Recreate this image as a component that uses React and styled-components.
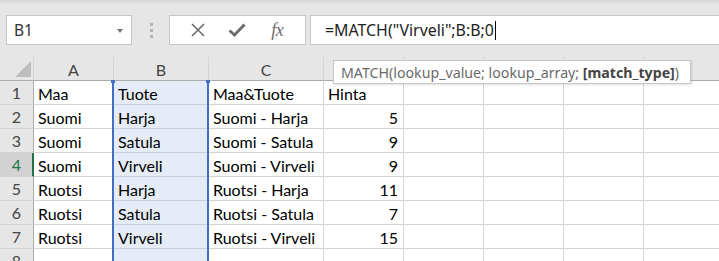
import React from "react";
import styled, { createGlobalStyle } from "styled-components";

const Global = createGlobalStyle`
  html, body { margin: 0; padding: 0; background: #ffffff; overflow: hidden; }
  * { box-sizing: border-box; }
`;

const Page = styled.div`
  width: 719px;
  height: 261px;
  overflow: hidden;
  background: #e6e6e6;
  display: flex;
  flex-direction: column;
`;

const Toolbar = styled.div`
  height: 57px;
  flex: none;
  display: flex;
  align-items: flex-start;
  padding: 15px 0 0 6px;
  background: linear-gradient(#d4d4d4 0px, #dedede 2px, #e6e6e6 5px, #e6e6e6 100%);
`;

const NameBox = styled.div`
  width: 126px;
  height: 30px;
  background: #fff;
  border: 1px solid #c6c6c6;
  display: flex;
  align-items: center;
  justify-content: space-between;
  padding: 0 8px 0 7px;
  font-family: "Noto Sans", "Open Sans", sans-serif;
  font-size: 15.5px;
  color: #333;
`;

const Caret = styled.span`
  width: 0;
  height: 0;
  border-left: 3.5px solid transparent;
  border-right: 3.5px solid transparent;
  border-top: 4px solid #777;
  margin-top: 1px;
`;

const Grip = styled.div`
  width: 3px;
  height: 30px;
  margin: 0 16px 0 18px;
  display: flex;
  flex-direction: column;
  justify-content: center;
  gap: 3px;
`;

const Dot = styled.span`
  width: 3px;
  height: 3px;
  background: #b4b4b4;
`;

const ButtonBox = styled.div`
  width: 137px;
  height: 30px;
  background: #fff;
  border: 1px solid #c6c6c6;
  display: flex;
  align-items: center;
  justify-content: space-around;
  padding: 0 8px;
`;

const IconButton = styled.span`
  width: 24px;
  height: 24px;
  display: flex;
  align-items: center;
  justify-content: center;
  color: #6d6d6d;
`;

const Fx = styled.span`
  font-family: "Liberation Serif", "DejaVu Serif", serif;
  font-style: italic;
  font-size: 18px;
  color: #6d6d6d;
  letter-spacing: -0.5px;
`;

const FormulaBox = styled.div`
  flex: 1;
  height: 30px;
  margin-left: 4px;
  background: #fff;
  border: 1px solid #c6c6c6;
  border-right: none;
  display: flex;
  align-items: center;
  padding-left: 14px;
  font-family: "Noto Sans", "Open Sans", sans-serif;
  font-size: 15.9px;
  color: #222;
`;

const Cursor = styled.span`
  display: inline-block;
  width: 1px;
  height: 19px;
  background: #000;
  margin-left: 1px;
  vertical-align: middle;
`;

const SheetWrap = styled.div`
  position: relative;
  flex: 1;
  overflow: hidden;
`;

const Grid = styled.div`
  display: grid;
  grid-template-columns: 34px 80px 95px 115px 80px 80px 80px 80px 80px;
  grid-auto-rows: 24px;
  background: #fff;
`;

const Corner = styled.div`
  background: #e6e6e6;
  border-right: 1px solid #d4d4d4;
  border-bottom: 1px solid #ababab;
  position: relative;
  &::after {
    content: "";
    position: absolute;
    right: 2px;
    bottom: 3px;
    width: 0;
    height: 0;
    border-left: 16px solid transparent;
    border-bottom: 16px solid #bdbdbd;
  }
`;

const ColHead = styled.div`
  background: #e6e6e6;
  border-right: 1px solid #d4d4d4;
  border-bottom: 1px solid #ababab;
  display: flex;
  align-items: center;
  justify-content: center;
  font-family: "Lato", "Open Sans", sans-serif;
  font-size: 16px;
  color: #444;
  padding-top: 1px;
`;

const RowHead = styled.div`
  background: ${(p) => (p.$active ? "#d2d2d2" : "#e6e6e6")};
  border-right: ${(p) => (p.$active ? "2px solid #217346" : "1px solid #ababab")};
  border-bottom: 1px solid #d4d4d4;
  display: flex;
  align-items: center;
  justify-content: center;
  font-family: "Lato", "Open Sans", sans-serif;
  font-size: 16px;
  color: ${(p) => (p.$active ? "#217346" : "#444")};
  padding-left: ${(p) => (p.$active ? "1px" : "0")};
`;

const Cell = styled.div`
  background: ${(p) => (p.$range ? "#e5ecf7" : "#fff")};
  border-right: 1px solid #d4d4d4;
  border-bottom: 1px solid ${(p) => (p.$range ? "#c7d0e0" : "#d4d4d4")};
  display: flex;
  align-items: center;
  justify-content: ${(p) => (p.$num ? "flex-end" : "flex-start")};
  padding: 1px 5px 0 4px;
  font-family: "Lato", "Open Sans", sans-serif;
  font-size: 16px;
  color: #000;
  white-space: nowrap;
  overflow: visible;
`;

const RangeFrame = styled.div`
  position: absolute;
  left: 112px;
  top: 23px;
  width: 97px;
  bottom: 0;
  border-left: 2px solid #3f6fc6;
  border-right: 2px solid #3f6fc6;
  pointer-events: none;
  &::before,
  &::after {
    content: "";
    position: absolute;
    top: 0;
    width: 4px;
    height: 3px;
    background: #3f6fc6;
  }
  &::before { left: -3px; }
  &::after { right: -3px; }
`;

const Tooltip = styled.div`
  position: absolute;
  left: 333px;
  top: 3px;
  width: 358px;
  height: 24px;
  background: #fff;
  border: 1px solid #c8c8c8;
  box-shadow: 1px 1px 2px rgba(0, 0, 0, 0.12);
  display: flex;
  align-items: center;
  padding-left: 7px;
  font-family: "Noto Sans", "Open Sans", sans-serif;
  font-size: 14.2px;
  color: #6a6a6a;
  white-space: nowrap;
`;

const Bold = styled.b`
  color: #444;
  font-weight: 700;
`;

const cols = ["A", "B", "C", "D", "E", "F", "G", "H"];

const rows = [
  ["Maa", "Tuote", "Maa&Tuote", "Hinta"],
  ["Suomi", "Harja", "Suomi - Harja", 5],
  ["Suomi", "Satula", "Suomi - Satula", 9],
  ["Suomi", "Virveli", "Suomi - Virveli", 9],
  ["Ruotsi", "Harja", "Ruotsi - Harja", 11],
  ["Ruotsi", "Satula", "Ruotsi - Satula", 7],
  ["Ruotsi", "Virveli", "Ruotsi - Virveli", 15],
  ["", "", "", ""],
];

export default function App() {
  return (
    <>
      <Global />
      <Page>
        <Toolbar>
          <NameBox>
            <span>B1</span>
            <Caret />
          </NameBox>
          <Grip>
            <Dot />
            <Dot />
            <Dot />
          </Grip>
          <ButtonBox>
            <IconButton>
              <svg width="16" height="16" viewBox="0 0 16 16">
                <path d="M2 2 L14 14 M14 2 L2 14" stroke="#6d6d6d" strokeWidth="1.6" fill="none" />
              </svg>
            </IconButton>
            <IconButton>
              <svg width="18" height="16" viewBox="0 0 18 16">
                <path d="M1.5 8.5 L6.5 13 L16.5 2.5" stroke="#6d6d6d" strokeWidth="3" fill="none" strokeLinejoin="miter" />
              </svg>
            </IconButton>
            <IconButton>
              <Fx>fx</Fx>
            </IconButton>
          </ButtonBox>
          <FormulaBox>
            <span>=MATCH("Virveli";B:B;0</span>
            <Cursor />
          </FormulaBox>
        </Toolbar>
        <SheetWrap>
          <Grid>
            <Corner />
            {cols.map((c, i) => (
              <ColHead key={i}>{c}</ColHead>
            ))}
            {rows.map((r, ri) => (
              <React.Fragment key={ri}>
                <RowHead $active={ri === 3}>{ri + 1}</RowHead>
                {cols.map((_, ci) => {
                  const v = r[ci];
                  const isNum = typeof v === "number";
                  return (
                    <Cell key={ci} $range={ci === 1} $num={isNum}>
                      {v === undefined ? "" : v}
                    </Cell>
                  );
                })}
              </React.Fragment>
            ))}
          </Grid>
          <RangeFrame />
          <Tooltip>
            MATCH(lookup_value; lookup_array;&nbsp;<Bold>[match_type]</Bold>)
          </Tooltip>
        </SheetWrap>
      </Page>
    </>
  );
}
